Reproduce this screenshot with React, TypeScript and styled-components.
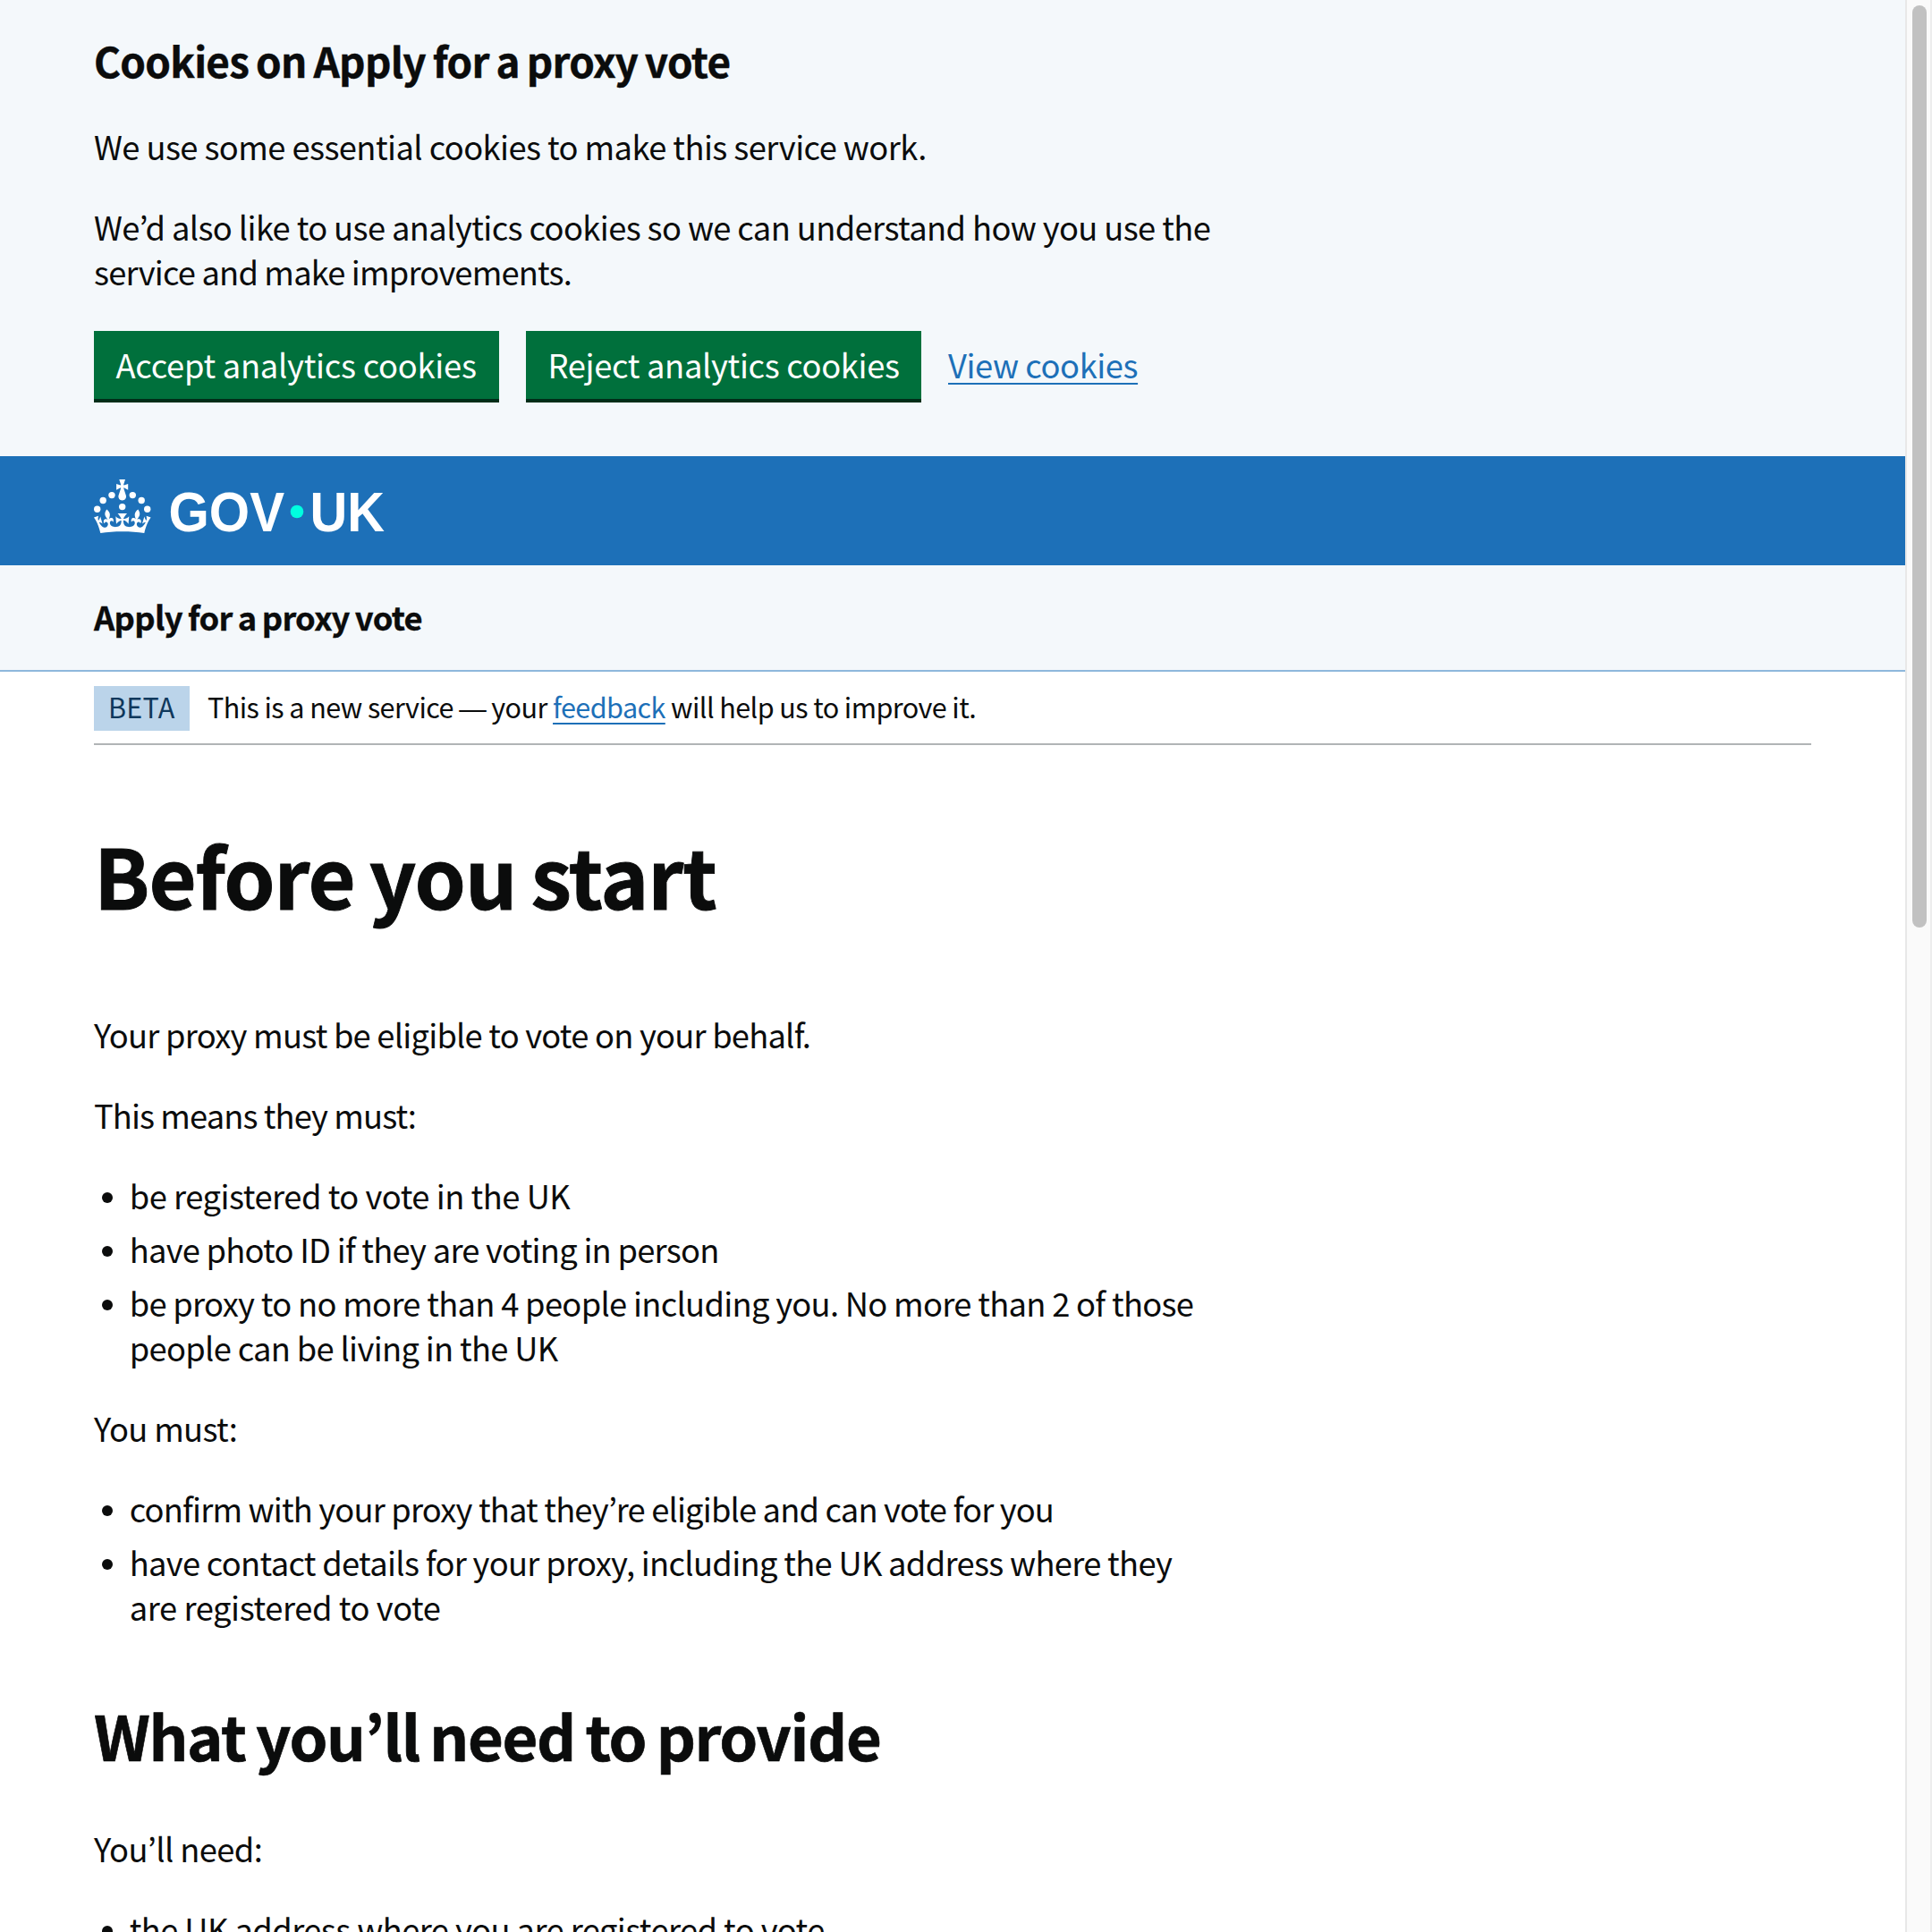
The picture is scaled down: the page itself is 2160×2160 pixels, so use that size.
import React from "react";
import styled, { createGlobalStyle, css } from "styled-components";

const color = {
  text: "#0b0c0c",
  link: "#1d70b8",
  tint: "#f4f8fb",
  green: "#00703c",
  greenDark: "#002d18",
  border: "#b1b4b6",
  navBorder: "#8eb8dc",
};

const GlobalStyle = createGlobalStyle`
  html, body { margin: 0; padding: 0; overflow: hidden; background: #fff; }
  * { box-sizing: border-box; }
`;

const Window = styled.div`
  display: flex;
  width: 2160px;
  height: 2160px;
  overflow: hidden;
  color: ${color.text};
  font-family: "Noto Sans CJK KR", "Noto Sans", sans-serif;
  font-size: 36.3px;
  line-height: 50px;
`;

const Page = styled.div`
  flex: 1;
  min-width: 0;
  height: 2160px;
  overflow: hidden;
`;

const gutter = css`
  padding-left: 105px;
  padding-right: 105px;
`;

const bold = css`
  margin: 0;
  font-weight: 700;
  word-spacing: -0.04em;
  -webkit-text-stroke: 0.01em currentColor;
`;

/* One set line of copy, with its own tracking in px. */
const Line = styled.span<{ $track: number }>`
  display: block;
  white-space: nowrap;
  letter-spacing: ${(p) => p.$track}px;
`;

const CookieBanner = styled.section`
  ${gutter}
  height: 510px;
  padding-top: 37px;
  background: ${color.tint};
`;

const BannerTitle = styled.h2`
  ${bold}
  font-size: 45.8px;
  line-height: 60px;
  margin-bottom: 41px;
`;

const Paragraph = styled.p`
  margin: 0 0 40px;
`;

const ButtonGroup = styled.div`
  display: flex;
  align-items: flex-start;
  gap: 30px;
  margin-top: 42px;
`;

const Button = styled.button<{ $width: number }>`
  width: ${(p) => p.$width}px;
  height: 76px;
  padding: 12px 0 14px 24.5px;
  border: 0;
  background: ${color.green};
  box-shadow: 0 4px 0 ${color.greenDark};
  color: #fff;
  font: inherit;
  text-align: left;
`;

const Link = styled.a`
  color: ${color.link};
  text-decoration: underline;
  text-decoration-thickness: 2px;
  text-underline-offset: 5px;
  text-decoration-skip-ink: none;
`;

const ButtonRowLink = styled(Link)`
  padding-top: 12px;
`;

const Header = styled.header`
  ${gutter}
  display: flex;
  align-items: flex-start;
  height: 122px;
  padding-top: 26px;
  background: ${color.link};
`;

const ServiceNav = styled.div`
  ${gutter}
  height: 119px;
  padding-top: 32px;
  background: ${color.tint};
  border-bottom: 2px solid ${color.navBorder};
`;

const ServiceName = styled.p`
  ${bold}
`;

const Container = styled.div`
  margin: 0 105px;
`;

const PhaseBanner = styled.div`
  display: flex;
  align-items: flex-start;
  height: 82px;
  padding-top: 16px;
  border-bottom: 2px solid ${color.border};
  font-size: 30.56px;
  line-height: 40px;
`;

const Tag = styled.strong`
  width: 107px;
  height: 50px;
  margin-right: 20px;
  padding: 3px 0 7px 16px;
  background: #bbd4ea;
  color: #0f385c;
  font-weight: 400;
`;

const PhaseText = styled.span`
  padding-top: 3px;
`;

const Dash = styled.span`
  font-family: "Liberation Sans", Arial, sans-serif;
  line-height: 1;
`;

const Title = styled.h1`
  ${bold}
  padding-top: 94px;
  margin-bottom: 104px;
  font-size: 91.7px;
  line-height: 100px;
`;

const SubTitle = styled.h2`
  ${bold}
  margin: 78px 0 62px;
  font-size: 68.7px;
  line-height: 80px;
`;

const List = styled.ul`
  display: flex;
  flex-direction: column;
  gap: 10px;
  margin: 0 0 40px;
  padding: 0;
  list-style: none;
`;

const Item = styled.li`
  display: flex;
  align-items: flex-start;

  &::before {
    content: "";
    flex: none;
    width: 12px;
    height: 12px;
    margin: 22px 18.7px 0 9px;
    border-radius: 50%;
    background: ${color.text};
  }
`;

const ScrollTrack = styled.div`
  flex: none;
  width: 30px;
  height: 2160px;
  padding: 6px 0 0 6px;
  background: #fafafa;
  border-left: 2px solid #e8e8e8;
  border-right: 2px solid #ededed;
`;

const ScrollThumb = styled.div`
  width: 16px;
  height: 1031px;
  border-radius: 8px;
  background: #c1c1c1;
`;

function Logo() {
  const letters = {
    fontFamily: '"Liberation Sans", Arial, sans-serif',
    fontWeight: 700,
    fontSize: 63,
    lengthAdjust: "spacingAndGlyphs" as const,
  };
  return (
    <svg width="326" height="60" viewBox="0 0 326 60" fill="#fff" role="img" aria-label="GOV.UK" overflow="visible">
      <circle cx="20" cy="17.6" r="3.7" />
      <circle cx="10.2" cy="23.5" r="3.7" />
      <circle cx="3.7" cy="33.2" r="3.7" />
      <circle cx="31.7" cy="30.6" r="3.7" />
      <circle cx="43.3" cy="17.6" r="3.7" />
      <circle cx="53.2" cy="23.5" r="3.7" />
      <circle cx="59.7" cy="33.2" r="3.7" />
      <path d="M33.1,9.8c.2-.1.3-.3.5-.5l4.6,2.4v-6.8l-4.6,1.5c-.1-.2-.3-.3-.5-.5l1.9-5.9h-6.7l1.9,5.9c-.2.1-.3.3-.5.5l-4.6-1.5v6.8l4.6-2.4c.1.2.3.3.5.5l-2.6,8c-.9,2.8,1.2,5.7,4.1,5.7h0c3,0,5.1-2.9,4.1-5.7l-2.6-8ZM37,37.9s-3.4,3.8-4.1,6.1c2.2,0,4.2-.5,6.4-2.8l-.7,8.5c-2-2.8-4.4-4.1-5.7-3.8.1,3.1.5,6.7,5.8,7.2,3.7.3,6.7-1.5,7-3.8.4-2.6-2-4.3-3.7-1.6-1.4-4.5,2.4-6.1,4.9-3.2-1.9-4.5-1.8-7.7,2.4-10.9,3,4,2.6,7.3-1.2,11.1,2.4-1.3,6.2,0,4,4.6-1.2-2.8-3.7-2.2-4.2.2-.3,1.7.7,3.7,3,4.2,1.9.3,4.7-.9,7-5.9-1.3,0-2.4.7-3.9,1.7l2.4-8c.6,2.3,1.4,3.7,2.2,4.5.6-1.6.5-2.8,0-5.3l5,1.8c-2.6,3.6-5.2,8.7-7.3,17.5-7.4-1.1-15.7-1.7-24.5-1.7h0c-8.8,0-17.1.6-24.5,1.7-2.1-8.9-4.7-13.9-7.3-17.5l5-1.8c-.5,2.5-.6,3.7,0,5.3.8-.8,1.6-2.3,2.2-4.5l2.4,8c-1.5-1-2.6-1.7-3.9-1.7,2.3,5,5.2,6.2,7,5.9,2.3-.4,3.3-2.4,3-4.2-.5-2.4-3-3.1-4.2-.2-2.2-4.6,1.6-6,4-4.6-3.7-3.7-4.2-7.1-1.2-11.1,4.2,3.2,4.3,6.4,2.4,10.9,2.5-2.8,6.3-1.3,4.9,3.2-1.8-2.7-4.1-1-3.7,1.6.3,2.3,3.3,4.1,7,3.8,5.4-.5,5.7-4.2,5.8-7.2-1.3-.2-3.7,1-5.7,3.8l-.7-8.5c2.2,2.3,4.2,2.7,6.4,2.8-.7-2.3-4.1-6.1-4.1-6.1h10.6,0Z" />
      <text x="83.5" y="57.7" textLength="129.5" {...letters}>GOV</text>
      <circle cx="227" cy="36" r="7.3" fill="#00ffe0" />
      <text x="241.5" y="57.7" textLength="83.5" {...letters}>UK</text>
    </svg>
  );
}

export default function App() {
  return (
    <Window>
      <GlobalStyle />
      <Page>
        <CookieBanner>
          <BannerTitle>
            <Line $track={-0.72}>Cookies on Apply for a proxy vote</Line>
          </BannerTitle>
          <Paragraph>
            <Line $track={-0.565}>We use some essential cookies to make this service work.</Line>
          </Paragraph>
          <Paragraph>
            <Line $track={-0.6}>We’d also like to use analytics cookies so we can understand how you use the</Line>
            <Line $track={-0.82}>service and make improvements.</Line>
          </Paragraph>
          <ButtonGroup>
            <Button $width={453}>
              <Line $track={-0.26}>Accept analytics cookies</Line>
            </Button>
            <Button $width={442}>
              <Line $track={-0.33}>Reject analytics cookies</Line>
            </Button>
            <ButtonRowLink>
              <Line $track={-0.42}>View cookies</Line>
            </ButtonRowLink>
          </ButtonGroup>
        </CookieBanner>

        <Header>
          <Logo />
        </Header>

        <ServiceNav>
          <ServiceName>
            <Line $track={-0.67}>Apply for a proxy vote</Line>
          </ServiceName>
        </ServiceNav>

        <Container>
          <PhaseBanner>
            <Tag>
              <Line $track={0.24}>BETA</Line>
            </Tag>
            <PhaseText>
              <Line $track={-0.58}>
                This is a new service <Dash>—</Dash> your <Link>feedback</Link> will help us to improve it.
              </Line>
            </PhaseText>
          </PhaseBanner>

          <Title>
            <Line $track={-1.03}>Before you start</Line>
          </Title>

          <Paragraph>
            <Line $track={-0.76}>Your proxy must be eligible to vote on your behalf.</Line>
          </Paragraph>
          <Paragraph>
            <Line $track={-0.9}>This means they must:</Line>
          </Paragraph>
          <List>
            <Item>
              <Line $track={-0.46}>be registered to vote in the UK</Line>
            </Item>
            <Item>
              <Line $track={-0.74}>have photo ID if they are voting in person</Line>
            </Item>
            <Item>
              <div>
                <Line $track={-0.69}>be proxy to no more than 4 people including you. No more than 2 of those</Line>
                <Line $track={-0.67}>people can be living in the UK</Line>
              </div>
            </Item>
          </List>

          <Paragraph>
            <Line $track={-0.65}>You must:</Line>
          </Paragraph>
          <List>
            <Item>
              <Line $track={-0.82}>confirm with your proxy that they’re eligible and can vote for you</Line>
            </Item>
            <Item>
              <div>
                <Line $track={-0.68}>have contact details for your proxy, including the UK address where they</Line>
                <Line $track={-0.4}>are registered to vote</Line>
              </div>
            </Item>
          </List>

          <SubTitle>
            <Line $track={-1.38}>What you’ll need to provide</Line>
          </SubTitle>
          <Paragraph>
            <Line $track={-0.6}>You’ll need:</Line>
          </Paragraph>
          <List>
            <Item>
              <Line $track={-0.57}>the UK address where you are registered to vote</Line>
            </Item>
          </List>
        </Container>
      </Page>
      <ScrollTrack>
        <ScrollThumb />
      </ScrollTrack>
    </Window>
  );
}
